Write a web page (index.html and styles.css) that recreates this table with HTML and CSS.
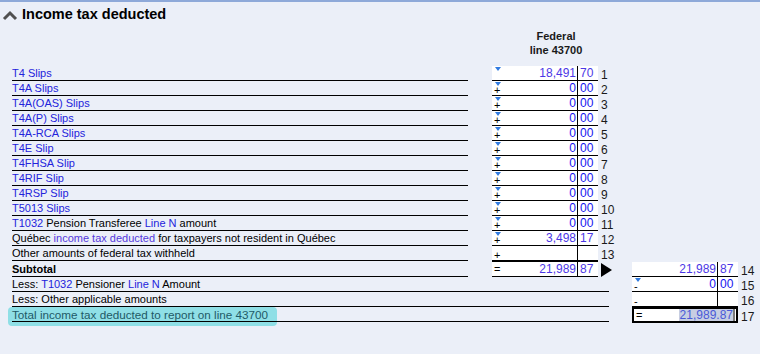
FILE: index.html
```html
<!DOCTYPE html>
<html>
<head>
<meta charset="utf-8">
<link rel="stylesheet" href="styles.css">
</head>
<body>
<div class="panel">
  <div class="title">
    <svg class="chev" viewBox="0 0 16 12" width="16" height="12"><polyline points="2,10 8,4 14,10" fill="none" stroke="#505050" stroke-width="3"/></svg>
    <span>Income tax deducted</span>
  </div>
  <div class="colhead">Federal<br>line 43700</div>
  <div class="rows">
    <div class="row">
      <div class="lbl"><span class="lnk">T4 Slips</span></div>
      <div class="box c3"><i class="mk"></i><div class="main"><span class="sg"></span><span class="val calc">18,491</span></div><div class="ct calc">70</div></div>
      <div class="ln">1</div>
    </div>
    <div class="row">
      <div class="lbl"><span class="lnk">T4A Slips</span></div>
      <div class="box c3"><i class="mk"></i><div class="main"><span class="sg">+</span><span class="val">0</span></div><div class="ct">00</div></div>
      <div class="ln">2</div>
    </div>
    <div class="row">
      <div class="lbl"><span class="lnk">T4A(OAS) Slips</span></div>
      <div class="box c3"><i class="mk"></i><div class="main"><span class="sg">+</span><span class="val">0</span></div><div class="ct">00</div></div>
      <div class="ln">3</div>
    </div>
    <div class="row">
      <div class="lbl"><span class="lnk">T4A(P) Slips</span></div>
      <div class="box c3"><i class="mk"></i><div class="main"><span class="sg">+</span><span class="val">0</span></div><div class="ct">00</div></div>
      <div class="ln">4</div>
    </div>
    <div class="row">
      <div class="lbl"><span class="lnk">T4A-RCA Slips</span></div>
      <div class="box c3"><i class="mk"></i><div class="main"><span class="sg">+</span><span class="val">0</span></div><div class="ct">00</div></div>
      <div class="ln">5</div>
    </div>
    <div class="row">
      <div class="lbl"><span class="lnk">T4E Slip</span></div>
      <div class="box c3"><i class="mk"></i><div class="main"><span class="sg">+</span><span class="val">0</span></div><div class="ct">00</div></div>
      <div class="ln">6</div>
    </div>
    <div class="row">
      <div class="lbl"><span class="lnk">T4FHSA Slip</span></div>
      <div class="box c3"><i class="mk"></i><div class="main"><span class="sg">+</span><span class="val">0</span></div><div class="ct">00</div></div>
      <div class="ln">7</div>
    </div>
    <div class="row">
      <div class="lbl"><span class="lnk">T4RIF Slip</span></div>
      <div class="box c3"><i class="mk"></i><div class="main"><span class="sg">+</span><span class="val">0</span></div><div class="ct">00</div></div>
      <div class="ln">8</div>
    </div>
    <div class="row">
      <div class="lbl"><span class="lnk">T4RSP Slip</span></div>
      <div class="box c3"><i class="mk"></i><div class="main"><span class="sg">+</span><span class="val">0</span></div><div class="ct">00</div></div>
      <div class="ln">9</div>
    </div>
    <div class="row">
      <div class="lbl"><span class="lnk">T5013 Slips</span></div>
      <div class="box c3"><i class="mk"></i><div class="main"><span class="sg">+</span><span class="val">0</span></div><div class="ct">00</div></div>
      <div class="ln">10</div>
    </div>
    <div class="row">
      <div class="lbl"><span class="lnk">T1032</span> Pension Transferee <span class="lnk">Line N</span> amount</div>
      <div class="box c3"><i class="mk"></i><div class="main"><span class="sg">+</span><span class="val">0</span></div><div class="ct">00</div></div>
      <div class="ln">11</div>
    </div>
    <div class="row">
      <div class="lbl">Québec <span class="lnk vis">income tax deducted</span> for taxpayers not resident in Québec</div>
      <div class="box c3"><i class="mk"></i><div class="main"><span class="sg">+</span><span class="val calc">3,498</span></div><div class="ct calc">17</div></div>
      <div class="ln">12</div>
    </div>
    <div class="row">
      <div class="lbl">Other amounts of federal tax withheld</div>
      <div class="box c3"><div class="main"><span class="sg">+</span><span class="val"></span></div><div class="ct"></div></div>
      <div class="ln">13</div>
    </div>
    <div class="row sub">
      <div class="lbl bold">Subtotal</div>
      <div class="box c3 topline"><div class="main"><span class="sg eq">=</span><span class="val calc">21,989</span></div><div class="ct calc">87</div></div>
      <div class="arrow"><svg viewBox="0 0 11 14" width="11" height="14"><polygon points="0,0 11,7 0,14" fill="#000"/></svg></div>
      <div class="box c5 drop"><div class="main"><span class="sg"></span><span class="val calc">21,989</span></div><div class="ct calc">87</div></div>
      <div class="ln">14</div>
    </div>
    <div class="row">
      <div class="lbl wide">Less: <span class="lnk">T1032</span> Pensioner <span class="lnk">Line N</span> Amount</div>
      <div class="box c5"><i class="mk"></i><div class="main"><span class="sg">-</span><span class="val">0</span></div><div class="ct">00</div></div>
      <div class="ln">15</div>
    </div>
    <div class="row">
      <div class="lbl wide">Less: Other applicable amounts</div>
      <div class="box c5"><div class="main"><span class="sg">-</span><span class="val"></span></div><div class="ct"></div></div>
      <div class="ln">16</div>
    </div>
    <div class="row tot">
      <div class="lbl wide total"><span class="hl"></span><span class="ttxt">Total income tax deducted to report on line 43700</span></div>
      <div class="box c5 focus"><span class="sg eq">=</span><span class="sel">21,989.87</span></div>
      <div class="ln">17</div>
    </div>
  </div>
</div>
</body>
</html>
```
FILE: styles.css
```css
body {
  margin: 0;
  font-family: "Liberation Sans", Arial, sans-serif;
}

.panel {
  width: 760px;
  height: 354px;
  box-sizing: border-box;
  background: #ebeff8;
  border-top: 2px solid #8ea9d9;
  color: #000;
}

.title {
  display: flex;
  align-items: center;
  gap: 4px;
  padding: 3px 0 0 2px;
  height: 18px;
  font-weight: bold;
  font-size: 14.5px;
  line-height: 18px;
}

.chev {
  display: block;
  margin-top: 1px;
}

.colhead {
  margin: 6px 0 0 492px;
  width: 128px;
  text-align: center;
  font-weight: bold;
  font-size: 11px;
  line-height: 14px;
  color: #1a1a1a;
}

.rows {
  margin-top: 9px;
}

.row {
  display: grid;
  grid-template-columns: 456px 24px 106px 34px 106px 1fr;
  padding-left: 12px;
  align-items: start;
}

.lbl {
  grid-column: 1;
  height: 14px;
  line-height: 14px;
  font-size: 11px;
  border-bottom: 1px solid #000;
  white-space: nowrap;
}

.lbl.wide {
  grid-column: 1 / 5;
  margin-right: 23px;
}

.bold {
  font-weight: bold;
}

.sub .lbl {
  height: 15px;
  line-height: 16px;
}

.lnk {
  color: #2323dc;
}

.lnk.vis {
  color: #5438dc;
}

.box {
  position: relative;
  display: flex;
  height: 14px;
  background: #fff;
  border-bottom: 1px solid #000;
  font-size: 12px;
  line-height: 14px;
}

.c3 {
  grid-column: 3;
}

.c5 {
  grid-column: 5;
}

.topline {
  border-top: 1px solid #000;
}

.drop {
  margin-top: 1px;
}

.main {
  width: 86px;
  box-sizing: border-box;
  border-right: 1px solid #000;
  display: flex;
  justify-content: space-between;
  padding-right: 1px;
}

.ct {
  width: 20px;
  box-sizing: border-box;
  padding-left: 2px;
  color: #1414f0;
}

.val {
  color: #1414f0;
}

.calc {
  color: #4b37e6;
}

.sg {
  padding-left: 2px;
  font-size: 11px;
  line-height: 18px;
  height: 14px;
  color: #000;
}

.sg.eq {
  line-height: 14px;
}

.mk {
  position: absolute;
  left: 3px;
  top: 1px;
  width: 0;
  height: 0;
  border-left: 3px solid transparent;
  border-right: 3px solid transparent;
  border-top: 4px solid #2f7ae0;
}

.ln {
  height: 15px;
  box-sizing: border-box;
  font-size: 12px;
  line-height: 13px;
  padding: 3px 0 0 3px;
  color: #1a1a1a;
}

.c5 + .ln {
  grid-column: 6;
}

.arrow {
  grid-column: 4;
  padding: 2px 0 0 3px;
  height: 14px;
}

.arrow svg {
  display: block;
}

.sub .ln,
.tot .ln {
  height: 16px;
  padding-top: 4px;
}

.tot .lbl {
  position: relative;
  height: 15px;
  line-height: 16px;
  font-size: 11.7px;
  border-bottom: none;
}

.tot .lbl::after {
  content: "";
  position: absolute;
  left: 0;
  right: 0;
  bottom: 0;
  height: 1px;
  background: #000;
  z-index: 2;
}

.hl {
  position: absolute;
  left: -4px;
  top: 0;
  width: 269px;
  height: 19px;
  border-radius: 4px;
  background: #8fdfe6;
  z-index: 1;
}

.ttxt {
  position: relative;
  z-index: 2;
  color: #1e5a66;
}

.focus {
  height: 12px;
  border: 2px solid #000;
  justify-content: space-between;
  line-height: 12px;
}

.focus .sg {
  line-height: 12px;
  height: 12px;
}

.sel {
  background: #c7cee2;
  color: #4a5ad8;
  padding-left: 1px;
  border-right: 2px solid #7a7a7a;
  margin-right: 1px;
}
```
